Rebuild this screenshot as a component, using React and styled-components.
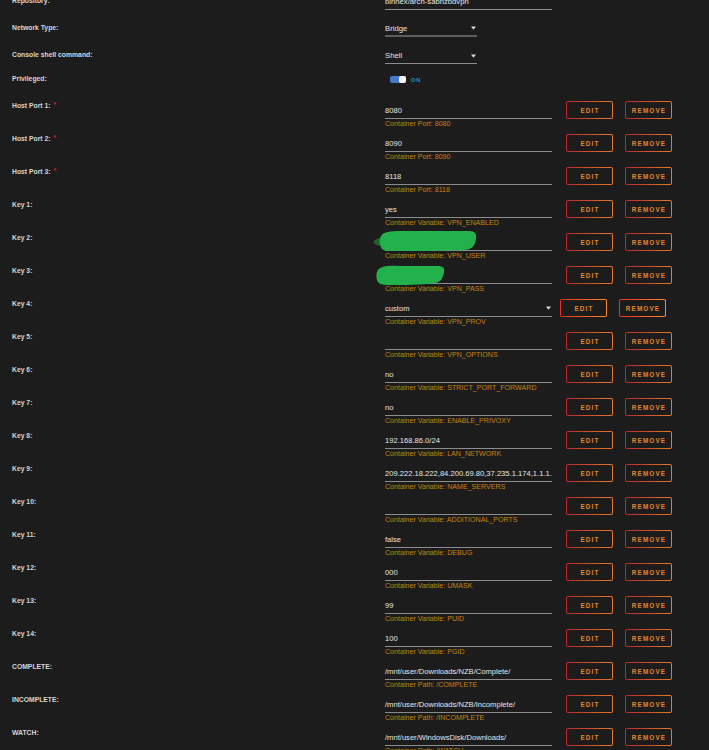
import React from "react";
import styled, { createGlobalStyle } from "styled-components";

const GlobalStyle = createGlobalStyle`
  html, body {
    margin: 0;
    padding: 0;
    background: #1c1c1c;
    overflow: hidden;
  }
  body {
    font-family: "Liberation Sans", Arial, sans-serif;
  }
`;

const topRows = [
  { label: "Repository:", kind: "input", value: "binhex/arch-sabnzbdvpn", h: 27 },
  { label: "Network Type:", kind: "select", value: "Bridge", h: 27, strong: true },
  { label: "Console shell command:", kind: "select", value: "Shell", h: 24 },
  { label: "Privileged:", kind: "toggle", h: 27 },
];

const configRows = [
  { label: "Host Port 1:", req: true, value: "8080", hint: "Container Port: 8080" },
  { label: "Host Port 2:", req: true, value: "8090", hint: "Container Port: 8090" },
  { label: "Host Port 3:", req: true, value: "8118", hint: "Container Port: 8118" },
  { label: "Key 1:", value: "yes", hint: "Container Variable: VPN_ENABLED" },
  { label: "Key 2:", value: "", hint: "Container Variable: VPN_USER", blot: "a" },
  { label: "Key 3:", value: "", hint: "Container Variable: VPN_PASS", blot: "b" },
  { label: "Key 4:", value: "custom", hint: "Container Variable: VPN_PROV", select: true },
  { label: "Key 5:", value: "", hint: "Container Variable: VPN_OPTIONS" },
  { label: "Key 6:", value: "no", hint: "Container Variable: STRICT_PORT_FORWARD" },
  { label: "Key 7:", value: "no", hint: "Container Variable: ENABLE_PRIVOXY" },
  { label: "Key 8:", value: "192.168.86.0/24", hint: "Container Variable: LAN_NETWORK" },
  { label: "Key 9:", value: "209.222.18.222,84.200.69.80,37.235.1.174,1.1.1.", hint: "Container Variable: NAME_SERVERS" },
  { label: "Key 10:", value: "", hint: "Container Variable: ADDITIONAL_PORTS" },
  { label: "Key 11:", value: "false", hint: "Container Variable: DEBUG" },
  { label: "Key 12:", value: "000", hint: "Container Variable: UMASK" },
  { label: "Key 13:", value: "99", hint: "Container Variable: PUID" },
  { label: "Key 14:", value: "100", hint: "Container Variable: PGID" },
  { label: "COMPLETE:", value: "/mnt/user/Downloads/NZB/Complete/", hint: "Container Path: /COMPLETE" },
  { label: "INCOMPLETE:", value: "/mnt/user/Downloads/NZB/Incomplete/", hint: "Container Path: /INCOMPLETE" },
  { label: "WATCH:", value: "/mnt/user/WindowsDisk/Downloads/", hint: "Container Path: /WATCH" },
];

// green marker scribbles hiding the vpn credentials
function Blot({ variant }) {
  if (variant === "a") {
    return (
      <BlotSvg width="106" height="24" viewBox="0 0 106 24" style={{ left: -12, top: -2 }}>
        <path d="M0 13 C2 10 5 9 9 9 L9 17 C5 17 2 16 0 13 Z" fill="#22b14c" opacity="0.45" />
        <path
          d="M8 7 C10 3 16 2 30 2 L96 2 C102 2 104 5 103 10 C102 16 100 20 92 21 C70 22 40 22 18 22 C12 22 9 21 8 18 C6 15 6 10 8 7 Z"
          fill="#22b14c"
        />
      </BlotSvg>
    );
  }
  return (
    <BlotSvg width="72" height="22" viewBox="0 0 72 22" style={{ left: -10, top: 0 }}>
      <path
        d="M3 6 C5 2 14 1 26 2 L62 2 C68 2 70 4 69 8 C68 14 66 18 60 19 C46 21 28 21 14 21 C7 21 3 20 2 16 C1 12 1 9 3 6 Z"
        fill="#22b14c"
      />
    </BlotSvg>
  );
}

function Caret() {
  return (
    <svg width="5" height="4" viewBox="0 0 5 4">
      <path d="M0 0.5 H5 L2.5 3.8 Z" fill="#d8d8d8" />
    </svg>
  );
}

function TopValue({ row }) {
  if (row.kind === "toggle") {
    return (
      <ToggleWrap>
        <Track>
          <Knob />
        </Track>
        <OnText>ON</OnText>
      </ToggleWrap>
    );
  }
  if (row.kind === "select") {
    return (
      <SmallSelect $strong={row.strong}>
        <span>{row.value}</span>
        <Caret />
      </SmallSelect>
    );
  }
  return <TopInput>{row.value}</TopInput>;
}

export default function App() {
  return (
    <>
      <GlobalStyle />
      <Page>
        {topRows.map((row) => (
          <Row key={row.label} $h={row.h}>
            <Label>{row.label}</Label>
            <TopCell>
              <TopValue row={row} />
            </TopCell>
          </Row>
        ))}
        {configRows.map((row) => (
          <Row key={row.label} $h={33}>
            <Label>
              {row.label}
              {row.req && <Req>*</Req>}
            </Label>
            <ValueCell>
              <Field>
                <TextBox>
                  <Value>{row.value}</Value>
                  {row.select && <Caret />}
                </TextBox>
                <Hint>{row.hint}</Hint>
                {row.blot && <Blot variant={row.blot} />}
              </Field>
              <Actions $gap={row.select ? 8 : 14}>
                <ActionButton $bright={row.select}>EDIT</ActionButton>
                <ActionButton $bright={row.select}>REMOVE</ActionButton>
              </Actions>
            </ValueCell>
          </Row>
        ))}
      </Page>
    </>
  );
}

const Page = styled.div`
  padding-left: 12px;
  margin-top: -6px;
`;

const Row = styled.div`
  display: grid;
  grid-template-columns: 373px 1fr;
  height: ${(p) => p.$h}px;
`;

const Label = styled.div`
  padding-top: 2px;
  line-height: 10px;
  font-size: 6.8px;
  font-weight: bold;
  color: #d6d6d6;
  white-space: nowrap;
`;

const Req = styled.span`
  color: #c8232a;
  margin-left: 3px;
  font-size: 7px;
  position: relative;
  top: -1px;
`;

const TopCell = styled.div`
  display: flex;
  align-items: flex-start;
`;

const TopInput = styled.div`
  width: 167px;
  height: 16px;
  box-sizing: border-box;
  border-bottom: 1px solid #8c8c8c;
  font-size: 7.7px;
  line-height: 15px;
  color: #e6e6e6;
`;

const SmallSelect = styled.div`
  width: 92px;
  height: 16px;
  box-sizing: border-box;
  display: flex;
  align-items: center;
  justify-content: space-between;
  padding-right: 1px;
  border-bottom: ${(p) => (p.$strong ? "2px solid #5e5e5e" : "1px solid #8c8c8c")};
  font-size: 7.7px;
  line-height: 15px;
  color: #e6e6e6;
`;

const ToggleWrap = styled.div`
  display: flex;
  align-items: center;
  gap: 5px;
  height: 15px;
  margin-left: 5px;
`;

const Track = styled.div`
  width: 16px;
  height: 7px;
  border-radius: 2px;
  background: #4a78c8;
  display: flex;
  justify-content: flex-end;
`;

const Knob = styled.div`
  width: 7px;
  height: 7px;
  border-radius: 2px;
  background: #f4f4f4;
`;

const OnText = styled.span`
  font-size: 5.8px;
  font-weight: bold;
  letter-spacing: 0.8px;
  color: #1f8dc2;
`;

const ValueCell = styled.div`
  display: flex;
  align-items: flex-start;
`;

const Field = styled.div`
  position: relative;
  width: 167px;
  padding-top: 3px;
`;

const TextBox = styled.div`
  height: 17px;
  box-sizing: border-box;
  display: flex;
  align-items: center;
  justify-content: space-between;
  gap: 4px;
  padding-right: 1px;
  border-bottom: 1px solid #8c8c8c;
  font-size: 7.6px;
  color: #e6e6e6;
`;

const Value = styled.span`
  min-width: 0;
  white-space: nowrap;
`;

const Hint = styled.div`
  line-height: 10px;
  font-size: 7.1px;
  color: #c7830e;
  white-space: nowrap;
`;

const BlotSvg = styled.svg`
  position: absolute;
`;

const Actions = styled.div`
  display: flex;
  gap: 12px;
  margin-left: ${(p) => p.$gap}px;
  margin-top: 2px;
`;

const ActionButton = styled.div`
  width: 47px;
  height: 18px;
  box-sizing: border-box;
  display: flex;
  align-items: center;
  justify-content: center;
  border: 1px solid transparent;
  border-radius: 2px;
  background: linear-gradient(#1c1c1c, #1c1c1c) padding-box,
    linear-gradient(90deg, ${(p) => (p.$bright ? "#ef2b25, #ff8a2a" : "#b8272a, #e47a2c")}) border-box;
  font-size: 6.3px;
  font-weight: bold;
  letter-spacing: 1.2px;
  padding-left: 1px;
  color: #e5872c;
`;
